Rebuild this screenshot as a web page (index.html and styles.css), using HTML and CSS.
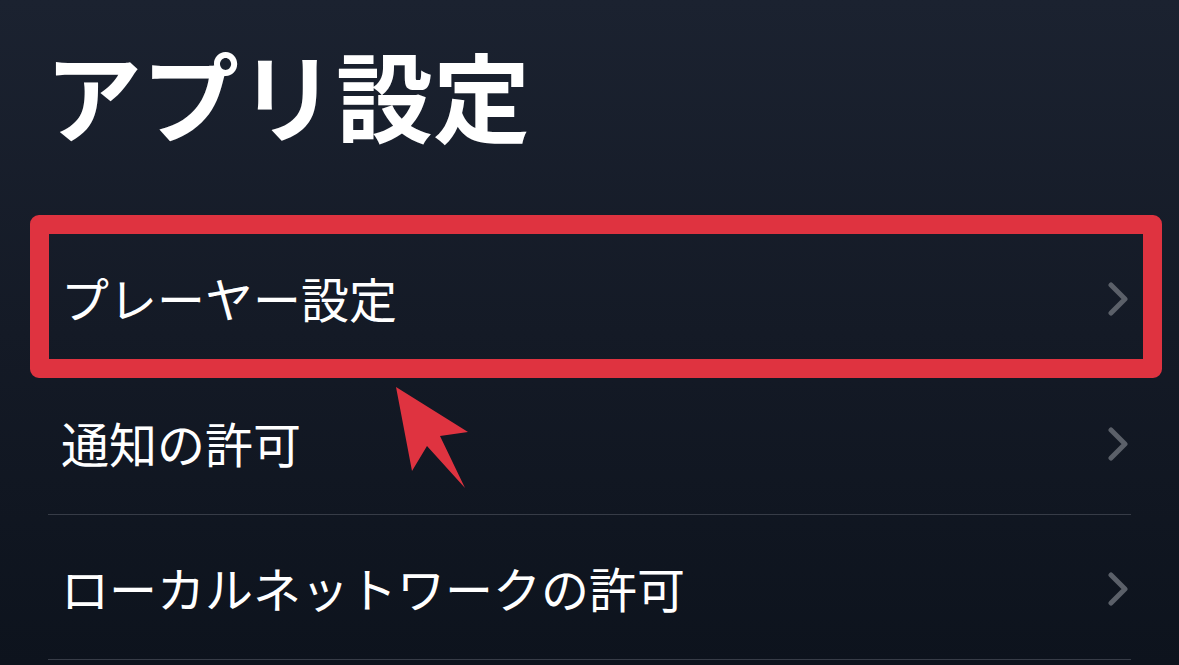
FILE: index.html
```html
<!DOCTYPE html>
<html lang="ja">
<head>
<meta charset="utf-8">
<link rel="stylesheet" href="styles.css">
</head>
<body>
<div class="page">
  <h1 class="title">アプリ設定</h1>
  <div class="list">
    <div class="row highlighted">
      <span class="label">プレーヤー設定</span>
      <svg class="chev" viewBox="0 0 20 34" width="20" height="34"><polyline points="3,3 17,17 3,31" fill="none" stroke="#5b6069" stroke-width="5" stroke-linecap="round" stroke-linejoin="round"/></svg>
      <div class="highlight-box"></div>
    </div>
    <div class="row">
      <span class="label">通知の許可</span>
      <svg class="chev" viewBox="0 0 20 34" width="20" height="34"><polyline points="3,3 17,17 3,31" fill="none" stroke="#5b6069" stroke-width="5" stroke-linecap="round" stroke-linejoin="round"/></svg>
    </div>
    <div class="row">
      <span class="label">ローカルネットワークの許可</span>
      <svg class="chev" viewBox="0 0 20 34" width="20" height="34"><polyline points="3,3 17,17 3,31" fill="none" stroke="#5b6069" stroke-width="5" stroke-linecap="round" stroke-linejoin="round"/></svg>
    </div>
  </div>
  <svg class="pointer" width="1179" height="665" viewBox="0 0 1179 665"><polygon points="396,387 468,432 440,436 465,488 427,446 412,471" fill="#df3340"/></svg>
</div>
</body>
</html>
```
FILE: styles.css
```css
html, body {
  margin: 0;
  padding: 0;
}
body {
  width: 1179px;
  height: 665px;
  overflow: hidden;
  background: linear-gradient(180deg, #1b2230 0%, #141a26 50%, #0d131d 100%);
  font-family: "Noto Sans CJK JP", "Noto Sans", sans-serif;
  color: #ffffff;
}
.page {
  position: relative;
  height: 665px;
  padding: 44px 48px 0 48px;
  box-sizing: border-box;
}
.title {
  margin: 0 0 0 -3px;
  font-size: 97px;
  line-height: 98px;
  font-weight: 700;
  letter-spacing: 0;
}
.list {
  margin-top: 83px;
}
.row {
  position: relative;
  height: 144px;
  border-bottom: 1px solid #373c47;
  display: flex;
  align-items: center;
  justify-content: space-between;
  padding: 0 3px 0 13px;
}
.label {
  font-size: 48px;
  font-weight: 400;
  line-height: 1;
}
.chev {
  display: block;
  margin-top: 4px;
}
.highlight-box {
  position: absolute;
  left: -18px;
  right: -31px;
  top: -10px;
  bottom: -9px;
  border: 19px solid #df3340;
  border-radius: 9px;
}
.pointer {
  position: absolute;
  left: 0;
  top: 0;
}
```
